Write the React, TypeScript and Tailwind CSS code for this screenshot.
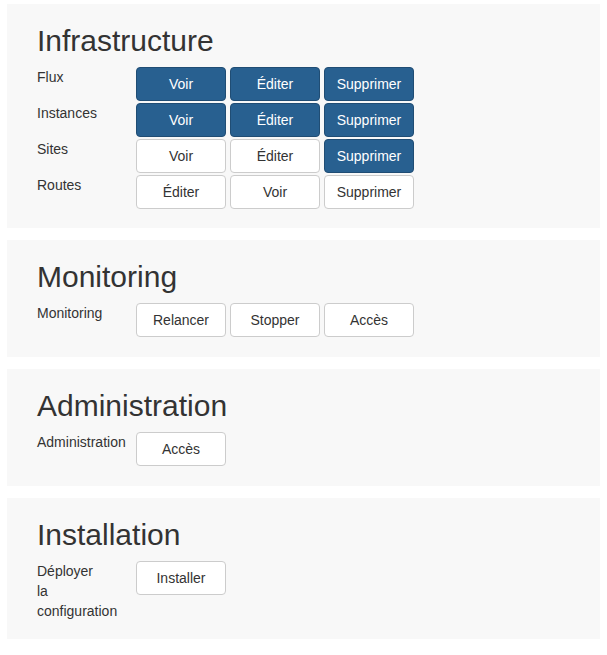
import type { ReactNode } from "react";

type Btn = { label: string; primary?: boolean };
type Row = { label: ReactNode; buttons: Btn[] };
type Section = { title: string; pad: string; rows: Row[] };

const sections: Section[] = [
  {
    title: "Infrastructure",
    pad: "pb-[19px]",
    rows: [
      {
        label: "Flux",
        buttons: [
          { label: "Voir", primary: true },
          { label: "Éditer", primary: true },
          { label: "Supprimer", primary: true },
        ],
      },
      {
        label: "Instances",
        buttons: [
          { label: "Voir", primary: true },
          { label: "Éditer", primary: true },
          { label: "Supprimer", primary: true },
        ],
      },
      {
        label: "Sites",
        buttons: [{ label: "Voir" }, { label: "Éditer" }, { label: "Supprimer", primary: true }],
      },
      {
        label: "Routes",
        buttons: [{ label: "Éditer" }, { label: "Voir" }, { label: "Supprimer" }],
      },
    ],
  },
  {
    title: "Monitoring",
    pad: "pb-[20px]",
    rows: [
      {
        label: "Monitoring",
        buttons: [{ label: "Relancer" }, { label: "Stopper" }, { label: "Accès" }],
      },
    ],
  },
  {
    title: "Administration",
    pad: "pb-[20px]",
    rows: [{ label: "Administration", buttons: [{ label: "Accès" }] }],
  },
  {
    title: "Installation",
    pad: "pb-[18px]",
    rows: [
      {
        label: (
          <>
            Déployer
            <br />
            la
            <br />
            configuration
          </>
        ),
        buttons: [{ label: "Installer" }],
      },
    ],
  },
];

function ActionButton({ label, primary }: Btn) {
  return (
    <button
      type="button"
      className={
        primary
          ? "w-[90px] h-[34px] rounded-[4px] border border-[#204d74] bg-[#286090] text-white text-[14px] leading-[20px]"
          : "w-[90px] h-[34px] rounded-[4px] border border-[#cccccc] bg-white text-[#333333] text-[14px] leading-[20px]"
      }
    >
      {label}
    </button>
  );
}

export default function App() {
  return (
    <div
      className="min-h-[655px] bg-white pt-[4px] px-[7px] flex flex-col gap-[12px] text-[#333333]"
      style={{ fontFamily: '"Liberation Sans", Arial, Helvetica, sans-serif' }}
    >
      {sections.map((s) => (
        <section key={s.title} className={`bg-[#f8f8f8] px-[30px] pt-[20px] ${s.pad}`}>
          <h2 className="text-[30px] leading-[33px] font-normal mb-[10px]">{s.title}</h2>
          <div className="flex flex-col gap-[2px]">
            {s.rows.map((r, i) => (
              <div key={i} className="flex items-start">
                <div className="w-[99px] text-[14px] leading-[20px]">{r.label}</div>
                <div className="flex gap-[4px]">
                  {r.buttons.map((b, j) => (
                    <ActionButton key={j} {...b} />
                  ))}
                </div>
              </div>
            ))}
          </div>
        </section>
      ))}
    </div>
  );
}
